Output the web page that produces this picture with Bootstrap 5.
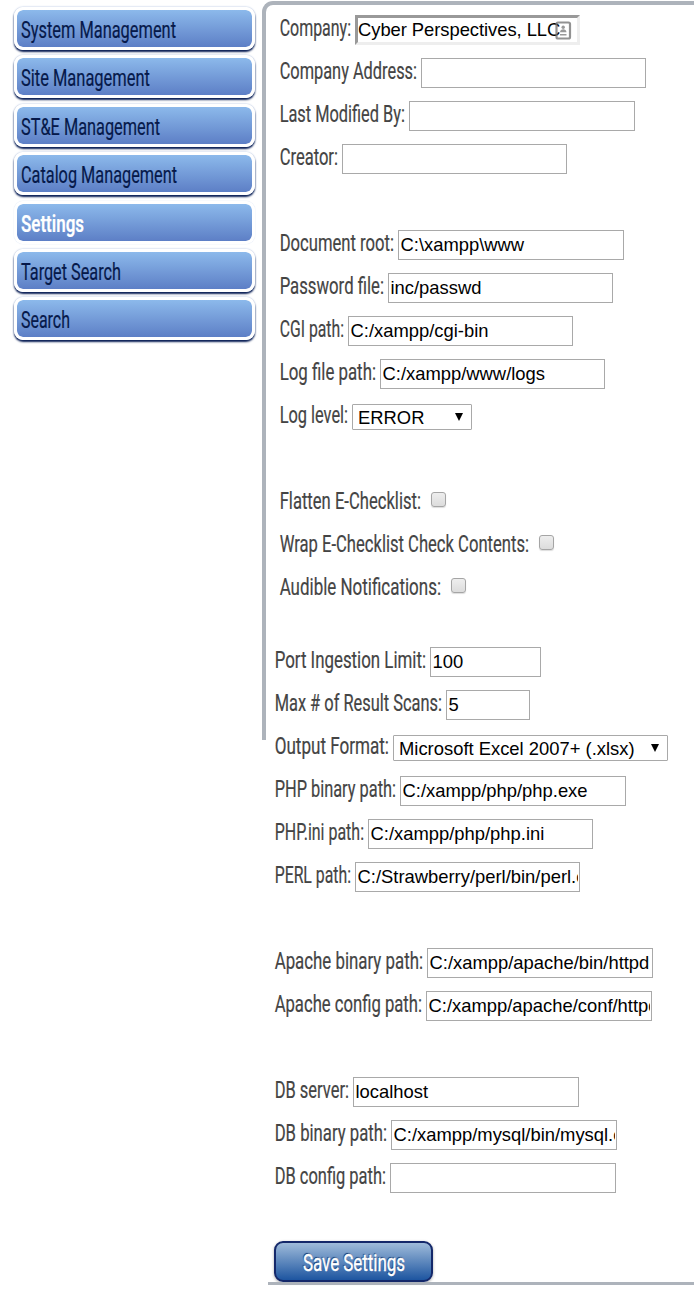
<!DOCTYPE html>
<html lang="en">
<head>
<meta charset="utf-8">
<meta name="viewport" content="width=device-width, initial-scale=1">
<title>Settings</title>
<link href="https://cdn.jsdelivr.net/npm/bootstrap@5.3.0/dist/css/bootstrap.min.css" rel="stylesheet">
<style>
  body { height: 1294px; overflow: hidden; background: #fff; color: #444; font-family: Roboto, sans-serif; font-size: 23.5px; }
  .side { width: 262px; padding: 7px 7px 0 14px; gap: 5.4px; }
  .side .nav-link { height: 43px; padding: 0 0 0 3.5px; border: 3px solid #fff; border-radius: 9px; line-height: 41px; color: #06194a;
    background: linear-gradient(#8cb9eb, #5d7fc6) padding-box; box-shadow: 0 2px 2px #0a1f55, 0 0 2px #9fb4d8; }
  .side .nav-link.active { color: #fff; font-weight: 600; box-shadow: 0 0 1px #b9cbea; }
  .panel { height: 739px; margin-top: 1px; padding-top: 3px; border: solid #adb3bb; border-width: 4px 0 0 4px; border-top-left-radius: 11px; }
  .line { height: 43px; }
  .group-a { padding-left: 14px; margin-bottom: 30px; }
  .group-b { padding-left: 9px; }
  .fit { display: block; flex: none; line-height: 40px; white-space: nowrap; -webkit-text-stroke: .2px currentColor; }
  .line .fit { text-indent: -.5px; }
  .fit span { display: inline-block; transform-origin: 0 50%; }
  .line .form-control, .line .form-select { flex: none; margin: 7px 0 0; border: 1px solid #a9a9a9; border-radius: 0; color: #000; background-color: #fff;
    font: 18.4px "Liberation Sans", sans-serif; }
  .line .form-control { width: 225px; height: 30px; padding: 1px 1px 1px 1.5px; }
  .line .inset { padding: 0; border: 3px solid; border-color: #999 #eee #eee #999; letter-spacing: -.05px; }
  .line .w-port { width: 111px; }
  .line .w-scan { width: 84px; }
  .line .w-wide { width: 226px; }
  .line .form-select { height: 26px; margin-top: 9px; padding: 0 0 0 5px; border-radius: 1px;
    background: #fff url("data:image/svg+xml,%3Csvg xmlns='http://www.w3.org/2000/svg' viewBox='0 0 8 8'%3E%3Cpath d='M0 0h8L4 8z'/%3E%3C/svg%3E") no-repeat right 8px top 8px / 8px 8px; }
  .line .w-level { width: 120px; }
  .line .w-format { width: 275px; }
  .line .form-check-input { flex: none; width: 15px; height: 15px; margin: 11px 0 0; border: 1px solid #a5a5a5; border-radius: 3px;
    background: linear-gradient(#eee, #dcdcdc); box-shadow: 0 1px 1px #ddd; }
  .contact { right: 8px; top: 13px; }
  .save { width: 159px; height: 41px; margin: 42px 0 0 8px; padding: 0 0 0 27px; border: 2px solid #14286a; border-radius: 9px; color: #fff; text-align: left; font-size: 23.5px;
    background: linear-gradient(#9fbbda, #1d55a0); text-shadow: -1px -1px 1px #173a70; box-shadow: 0 1px 3px #aaa; }
  .save:hover { color: #fff; }
  .save .fit { line-height: 40px; -webkit-text-stroke-width: .4px; }
  .rule { height: 3px; margin-left: 2px; background: #adb3bb; }
</style>
</head>
<body>
<div class="d-flex align-items-start">
  <nav class="side nav flex-column flex-nowrap flex-shrink-0">
    <a class="nav-link fit" data-w="155"><span>System Management</span></a>
    <a class="nav-link fit" data-w="129"><span>Site Management</span></a>
    <a class="nav-link fit" data-w="139"><span>ST&amp;E Management</span></a>
    <a class="nav-link fit" data-w="156"><span>Catalog Management</span></a>
    <a class="nav-link fit active" data-w="63"><span>Settings</span></a>
    <a class="nav-link fit" data-w="100"><span>Target Search</span></a>
    <a class="nav-link fit" data-w="49"><span>Search</span></a>
  </nav>
  <main class="panel flex-grow-1">
    <form>
      <div class="group-a">
        <div class="line d-flex"><label class="fit" data-box="75"><span>Company:</span></label>
          <div class="position-relative"><input class="form-control inset" value="Cyber Perspectives, LLC">
            <svg class="contact position-absolute" width="17" height="19" viewBox="0 0 17 19"><rect x="1.5" y="1.5" width="13.5" height="16" rx="1.5" fill="none" stroke="#777" stroke-opacity=".8" stroke-width="2.2"/><circle cx="8.2" cy="6.3" r="1.7" fill="#999"/><path d="M5 11.2c0-4 6.500-4 6.500 0zM5 13h6.500v1.600H5z" fill="#999"/></svg></div></div>
        <div class="line d-flex"><label class="fit" data-box="141"><span>Company Address:</span></label><input class="form-control"></div>
        <div class="line d-flex"><label class="fit" data-box="129"><span>Last Modified By:</span></label><input class="form-control w-wide"></div>
        <div class="line d-flex"><label class="fit" data-box="62"><span>Creator:</span></label><input class="form-control"></div>
        <div class="line"></div>
        <div class="line d-flex"><label class="fit" data-box="118"><span>Document root:</span></label><input class="form-control w-wide" value="C:\xampp\www"></div>
        <div class="line d-flex"><label class="fit" data-box="108"><span>Password file:</span></label><input class="form-control" value="inc/passwd"></div>
        <div class="line d-flex"><label class="fit" data-box="68"><span>CGI path:</span></label><input class="form-control" value="C:/xampp/cgi-bin"></div>
        <div class="line d-flex"><label class="fit" data-box="100"><span>Log file path:</span></label><input class="form-control" value="C:/xampp/www/logs"></div>
        <div class="line d-flex"><label class="fit" data-box="72"><span>Log level:</span></label><select class="form-select w-level"><option>ERROR</option></select></div>
        <div class="line"></div>
        <div class="line d-flex"><label class="fit" data-box="151" data-w="141"><span>Flatten E-Checklist:</span></label><input type="checkbox" class="form-check-input"></div>
        <div class="line d-flex"><label class="fit" data-box="259" data-w="249"><span>Wrap E-Checklist Check Contents:</span></label><input type="checkbox" class="form-check-input"></div>
        <div class="line d-flex"><label class="fit" data-box="171" data-w="161"><span>Audible Notifications:</span></label><input type="checkbox" class="form-check-input"></div>
      </div>
      <div class="group-b">
        <div class="line d-flex"><label class="fit" data-box="155"><span>Port Ingestion Limit:</span></label><input class="form-control w-port" value="100"></div>
        <div class="line d-flex"><label class="fit" data-box="171"><span>Max # of Result Scans:</span></label><input class="form-control w-scan" value="5"></div>
        <div class="line d-flex"><label class="fit" data-box="118"><span>Output Format:</span></label><select class="form-select w-format"><option>Microsoft Excel 2007+ (.xlsx)</option></select></div>
        <div class="line d-flex"><label class="fit" data-box="125"><span>PHP binary path:</span></label><input class="form-control w-wide" value="C:/xampp/php/php.exe"></div>
        <div class="line d-flex"><label class="fit" data-box="93"><span>PHP.ini path:</span></label><input class="form-control" value="C:/xampp/php/php.ini"></div>
        <div class="line d-flex"><label class="fit" data-box="80"><span>PERL path:</span></label><input class="form-control" value="C:/Strawberry/perl/bin/perl.exe"></div>
        <div class="line"></div>
        <div class="line d-flex"><label class="fit" data-box="152"><span>Apache binary path:</span></label><input class="form-control w-wide" value="C:/xampp/apache/bin/httpd"></div>
        <div class="line d-flex"><label class="fit" data-box="151"><span>Apache config path:</span></label><input class="form-control w-wide" value="C:/xampp/apache/conf/httpd.conf"></div>
        <div class="line"></div>
        <div class="line d-flex"><label class="fit" data-box="78"><span>DB server:</span></label><input class="form-control w-wide" value="localhost"></div>
        <div class="line d-flex"><label class="fit" data-box="116"><span>DB binary path:</span></label><input class="form-control w-wide" value="C:/xampp/mysql/bin/mysql.exe"></div>
        <div class="line d-flex"><label class="fit" data-box="115"><span>DB config path:</span></label><input class="form-control w-wide"></div>
      </div>
      <button type="button" class="save btn d-block"><span class="fit" data-w="102"><span>Save Settings</span></span></button>
      <div class="rule"></div>
    </form>
  </main>
</div>
<script src="https://cdn.jsdelivr.net/npm/bootstrap@5.3.0/dist/js/bootstrap.bundle.min.js"></script>
<script>
  // Condense each caption to its column width.
  document.querySelectorAll('.fit').forEach(el => {
    const text = el.querySelector('span');
    const box = Number(el.dataset.box);
    const width = Number(el.dataset.w) || box - 4;
    text.style.transform = `scaleX(${width / text.getBoundingClientRect().width})`;
    if (box) el.style.width = box + 'px';
  });
</script>
</body>
</html>
